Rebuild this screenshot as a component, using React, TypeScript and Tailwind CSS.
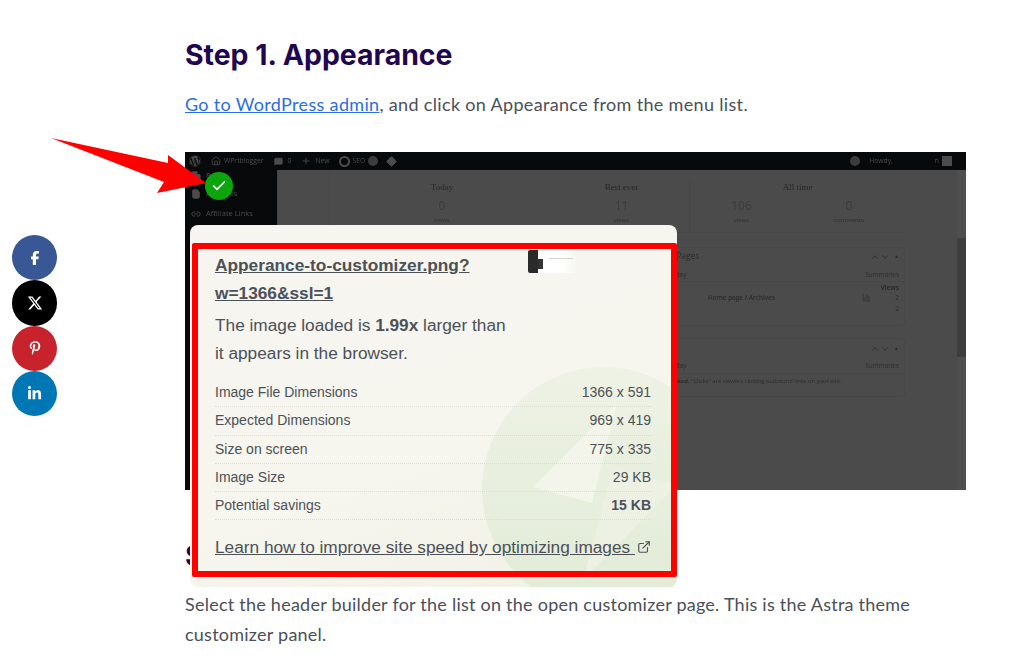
import { FaFacebookF, FaXTwitter, FaPinterestP, FaLinkedinIn, FaWordpress } from "react-icons/fa6"
import { Check, ExternalLink, Home, MessageSquare, Plus, ChevronUp, ChevronDown, Link2, FileText, BarChart3, Diamond, Copy } from "lucide-react"

const shareButtons = [
  { label: "Facebook", bg: "bg-[#3a5795]", icon: <FaFacebookF size={14} /> },
  { label: "X", bg: "bg-black", icon: <FaXTwitter size={16} /> },
  { label: "Pinterest", bg: "bg-[#c8232c]", icon: <FaPinterestP size={14} /> },
  { label: "LinkedIn", bg: "bg-[#0077b5]", icon: <FaLinkedinIn size={15} /> },
]

const imageRows = [
  { label: "Image File Dimensions", value: "1366 x 591" },
  { label: "Expected Dimensions", value: "969 x 419" },
  { label: "Size on screen", value: "775 x 335" },
  { label: "Image Size", value: "29 KB" },
  { label: "Potential savings", value: "15 KB", bold: true },
]

function AdminBar() {
  return (
    <div className="flex h-[18px] items-center bg-[#08090b] pl-[4px] pr-[14px] text-[6.8px] text-[#4c4c4c]">
      <FaWordpress size={12} />
      <Home size={10} className="ml-[10px]" />
      <span className="ml-[3px]">WPrtblogger</span>
      <MessageSquare size={9} fill="#4c4c4c" className="ml-[10px]" />
      <span className="ml-[5px]">0</span>
      <Plus size={10} className="ml-[10px]" />
      <span className="ml-[4px]">New</span>
      <span className="ml-[9px] h-[11px] w-[11px] rounded-full border-2 border-[#4c4c4c]" />
      <span className="ml-[3px]">SEO</span>
      <span className="ml-[3px] h-[10px] w-[10px] rounded-full bg-[#3c3c3c]" />
      <Diamond size={11} fill="#4c4c4c" className="ml-[8px]" />
      <span className="ml-auto h-[10px] w-[10px] rounded-full bg-[#3c3c3c]" />
      <span className="ml-[9px]">Howdy,</span>
      <span className="ml-[42px]">n</span>
      <span className="ml-[3px] h-[10px] w-[10px] bg-[#4c4c4c]" />
    </div>
  )
}

function Stat({ title, children, className }: { title: string; children: React.ReactNode; className: string }) {
  return (
    <div className={className}>
      <div className="text-center font-['Liberation_Serif',serif] text-[9px] text-[#262626]">{title}</div>
      <div className="mt-[3px] flex justify-around">{children}</div>
    </div>
  )
}

function Figure({ n, unit }: { n: string; unit: string }) {
  return (
    <div className="text-center">
      <div className="text-[12px] leading-[16px] text-[#3a3a3a]">{n}</div>
      <div className="mt-[2px] text-[6px] text-[#2e2e2e]">{unit}</div>
    </div>
  )
}

function Scaled() {
  return (
    <div className="relative flex h-[338px] flex-col bg-[#4b4b4b] font-['Open_Sans',sans-serif] blur-[0.3px]">
      <AdminBar />
      <div className="flex flex-1">
        <div className="flex w-[92px] flex-col bg-[#08090b] pl-[6px] text-[7.6px] text-[#4c4c4c]">
          <div className="flex h-[12px] items-center gap-[5px]">
            <Copy size={10} fill="#4c4c4c" />
            <span>Posts</span>
          </div>
          <div className="mt-[2px] flex h-[20px] items-center gap-[5px]">
            <FileText size={10} fill="#4c4c4c" />
            <span>All Pages</span>
          </div>
          <div className="flex h-[20px] items-center gap-[5px]">
            <Link2 size={10} />
            <span>Affiliate Links</span>
          </div>
        </div>
        <div className="flex flex-1 flex-col border-l border-[#444] pl-[51px] pr-[52px]">
          <div className="flex h-[63px] rounded-b-[3px] border-b border-l border-[#474747] pt-[11px]">
            <Stat title="Today" className="w-[224px]">
              <Figure n="0" unit="views" />
            </Stat>
            <Stat title="Best ever" className="w-[135px]">
              <Figure n="11" unit="views" />
            </Stat>
            <Stat title="All time" className="flex-1 border-l border-dotted border-[#414141]">
              <Figure n="106" unit="views" />
              <Figure n="0" unit="comments" />
            </Stat>
          </div>
          <div className="mt-[14px] h-[79px] rounded-[3px] border border-[#474747] text-[6.4px] text-[#2c2c2c]">
            <div className="flex h-[17px] items-center pl-[297px] pr-[5px]">
              <span className="text-[8.5px]">Top Posts &amp; Pages</span>
              <ChevronUp size={10} className="ml-auto" />
              <ChevronDown size={10} />
              <span className="ml-[4px] text-[5px]">▲</span>
            </div>
            <div className="flex h-[17px] items-center border-b border-[#474747] pl-[327px] pr-[5px] pt-[3px]">
              <span>Yesterday</span>
              <span className="ml-auto">Summaries</span>
            </div>
            <div className="pr-[5px] pt-[1px] text-right font-bold">Views</div>
            <div className="flex items-center pr-[5px]">
              <span className="ml-[378px] font-semibold">Home page / Archives</span>
              <BarChart3 size={9} className="ml-[87px]" />
              <span className="ml-auto">2</span>
            </div>
            <div className="pr-[5px] pt-[2px] text-right">2</div>
          </div>
          <div className="mt-[12px] h-[59px] rounded-[3px] border border-[#474747] text-[6.4px] text-[#2c2c2c]">
            <div className="flex h-[20px] items-center justify-end pr-[5px]">
              <ChevronUp size={10} />
              <ChevronDown size={10} />
              <span className="ml-[4px] text-[5px]">▲</span>
            </div>
            <div className="flex h-[15px] items-center border-b border-[#474747] pl-[327px] pr-[5px]">
              <span>Yesterday</span>
              <span className="ml-auto">Summaries</span>
            </div>
            <div className="whitespace-nowrap pl-[337px] pt-[3px] text-[5.8px]">
              <b>Clicked.</b> "Clicks" are viewers clicking outbound links on your site.
            </div>
          </div>
        </div>
        <div className="relative w-[9px] bg-[#4f4f4f]">
          <div className="mt-[68px] h-[119px] bg-[#3e3e3e]" />
        </div>
      </div>
    </div>
  )
}

function Popover() {
  return (
    <div className="absolute left-[190px] top-[225px] z-10 h-[362px] w-[487px] overflow-hidden rounded-[8px] bg-[linear-gradient(160deg,#f6f5f1_0%,#f6f5ee_60%,#f0f1e4_100%)] pb-[10px] pl-[2px] pt-[18px] font-['Liberation_Sans',sans-serif] text-[#4c5157]">
      <svg className="absolute left-0 top-0" width="487" height="362" viewBox="190 225 487 362">
        <defs>
          <linearGradient id="mark" x1="0" y1="0" x2="0" y2="1">
            <stop offset="0" stopColor="#eef2e5" />
            <stop offset="1" stopColor="#e1ebd6" />
          </linearGradient>
        </defs>
        <circle cx="604" cy="489" r="122" fill="url(#mark)" />
        <polygon points="533,487 617,403 592,503" fill="#f3f4ea" />
        <polygon points="613,468 677,485 583,580" fill="#edf1e3" />
      </svg>
      <div className="relative flex h-full flex-col rounded-[2px] border-[6px] border-[#ff0000] pl-[17px] pr-[20px] pt-[2px]">
        <a className="w-[280px] text-[17.3px] font-bold leading-[28px] underline">Apperance-to-customizer.png?w=1366&amp;ssl=1</a>
        <p className="mt-[4px] text-[17.25px] leading-[28px]">
          The image loaded is <b>1.99x</b> larger than
          <br />
          it appears in the browser.
        </p>
        <div className="mt-[12px] flex flex-col text-[14px]">
          {imageRows.map((row) => (
            <div
              key={row.label}
              className="flex h-[28.3px] items-center justify-between border-b border-dotted border-[#dcdcd4]"
            >
              <span>{row.label}</span>
              <span className={row.bold ? "font-bold" : ""}>{row.value}</span>
            </div>
          ))}
        </div>
        <a className="mt-[13px] flex items-center whitespace-nowrap text-[17.25px] leading-[28px]">
          <span className="underline">Learn how to improve site speed by optimizing images&nbsp;</span>
          <ExternalLink size={14} className="ml-[2px]" />
        </a>
      </div>
      <div className="absolute left-[338px] top-[25px] flex h-[23px] w-[49px] overflow-hidden rounded-[2px] bg-[linear-gradient(90deg,#ffffff_70%,#f6f5ee_100%)]">
        <div className="h-full w-[10px] bg-[#2a2a2a]" />
        <div className="mt-[9px] h-[10px] w-[5px] bg-[#333]" />
        <div className="ml-[6px] mt-[8px] h-[1px] w-[24px] bg-[#d5d5d5]" />
      </div>
    </div>
  )
}

export default function App() {
  return (
    <div className="relative h-[668px] w-[1024px] overflow-hidden bg-white font-['Lato',sans-serif]">
      <main className="ml-[185px] w-[781px] pt-[35px]">
        <h2 className="font-['Inter',sans-serif] text-[28.4px] font-bold leading-[40px] text-[#1f0650]">Step 1. Appearance</h2>
        <p className="mt-[14px] text-[18px] leading-[30px] tracking-[0.33px] text-[#4b4f58]">
          <a className="text-[#2a6ee8] underline">Go to WordPress admin</a>, and click on Appearance from the menu list.
        </p>
        <div className="mt-[33px]">
          <Scaled />
        </div>
        <h2 className="mt-[46px] font-['Inter',sans-serif] text-[28.4px] font-bold leading-[40px] text-[#1f0650]">Step 2. Header Builder</h2>
        <p className="mt-[13px] text-[18px] leading-[30px] tracking-[0.24px] text-[#4b4f58]">
          Select the header builder for the list on the open customizer page. This is the Astra theme customizer panel.
        </p>
      </main>

      <Popover />

      <svg className="absolute left-0 top-0 z-20" width="210" height="200" viewBox="0 0 210 200">
        <polygon points="51,138 168,163 168,155 206,183 157,193 164,182" fill="#ff0000" />
      </svg>
      <div className="absolute left-[205px] top-[172px] z-20 flex h-[28px] w-[28px] items-center justify-center rounded-full bg-[#0da50d] text-white">
        <Check size={16} strokeWidth={2.5} />
      </div>

      <div className="absolute left-[12px] top-[235px] flex flex-col">
        {shareButtons.map((b) => (
          <a key={b.label} aria-label={b.label} className={`flex h-[45.3px] w-[45px] items-center justify-center rounded-full text-white ${b.bg}`}>
            {b.icon}
          </a>
        ))}
      </div>
    </div>
  )
}
